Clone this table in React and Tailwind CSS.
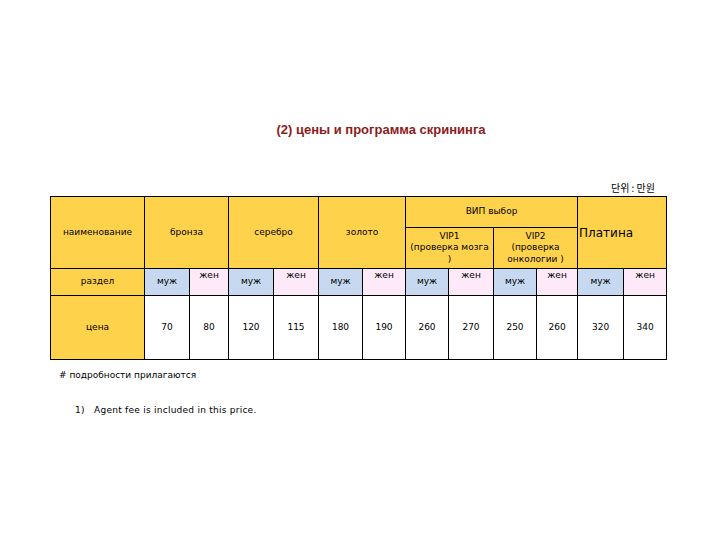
const yellow = "bg-[#ffd24c]";
const blue = "bg-[#c6d9f0]";
const pink = "bg-[#fde9f8]";

const prices = [70, 80, 120, 115, 180, 190, 260, 270, 250, 260, 320, 340];
const widths = [94, 45, 39, 45, 45, 44, 43, 43, 45, 43, 41, 46, 43];

function Head({ children, className = "", ...rest }) {
  return (
    <td
      {...rest}
      className={`border border-black ${yellow} text-center align-middle p-0 ${className}`}
    >
      {children}
    </td>
  );
}

export default function App() {
  return (
    <div
      className="w-[720px] h-[540px] bg-white text-black"
      style={{ fontFamily: '"DejaVu Sans", Verdana, sans-serif' }}
    >
      <div className="pt-[122px] pl-[42px] text-center">
        <h1
          className="text-[13px] leading-[16px] font-bold text-[#8c1c1c]"
          style={{ fontFamily: '"Liberation Sans", Arial, sans-serif' }}
        >
          (2) цены и программа скрининга
        </h1>
      </div>

      <div className="ml-[50px] w-[616px]">
        <div
          className="mt-[43px] h-[15px] pr-[11px] text-right text-[10px] leading-[14px]"
          style={{ fontFamily: '"Noto Sans CJK KR", sans-serif' }}
        >
          단위 : 만원
        </div>

        <table className="table-fixed border-collapse w-[616px] text-[9px] leading-[11.5px]">
          <colgroup>
            {widths.map((w, i) => (
              <col key={i} style={{ width: w }} />
            ))}
          </colgroup>
          <tbody>
            <tr className="h-[31px]">
              <Head rowSpan={2}>наименование</Head>
              <Head rowSpan={2} colSpan={2}>бронза</Head>
              <Head rowSpan={2} colSpan={2}>серебро</Head>
              <Head rowSpan={2} colSpan={2}>золото</Head>
              <Head colSpan={4}>ВИП выбор</Head>
              <Head
                rowSpan={2}
                colSpan={2}
                className="!text-left pl-[1px] text-[12px] leading-[16px]"
              >
                Платина
              </Head>
            </tr>
            <tr className="h-[41px]">
              <Head colSpan={2}>
                VIP1
                <br />
                (проверка мозга
                <br />)
              </Head>
              <Head colSpan={2}>
                VIP2
                <br />
                (проверка
                <br />
                онкологии )
              </Head>
            </tr>
            <tr className="h-[27px]">
              <Head>раздел</Head>
              {Array.from({ length: 6 }).map((_, i) => (
                <SexPair key={i} />
              ))}
            </tr>
            <tr className="h-[64px]">
              <Head>цена</Head>
              {prices.map((p, i) => (
                <td key={i} className="border border-black bg-white text-center align-middle p-0">
                  {p}
                </td>
              ))}
            </tr>
          </tbody>
        </table>
      </div>

      <p className="mt-[9px] ml-[59px] text-[9px] leading-[12px]">
        # подробности прилагаются
      </p>
      <p className="mt-[23px] ml-[75px] text-[9px] leading-[12px] tracking-[0.25px]">
        1)&nbsp;&nbsp;&nbsp;Agent fee is included in this price.
      </p>
    </div>
  );
}

function SexPair() {
  return (
    <>
      <td className={`border border-black ${blue} text-center align-middle p-0`}>муж</td>
      <td className={`border border-black ${pink} text-center align-top p-0 pt-[1px]`}>жен</td>
    </>
  );
}
